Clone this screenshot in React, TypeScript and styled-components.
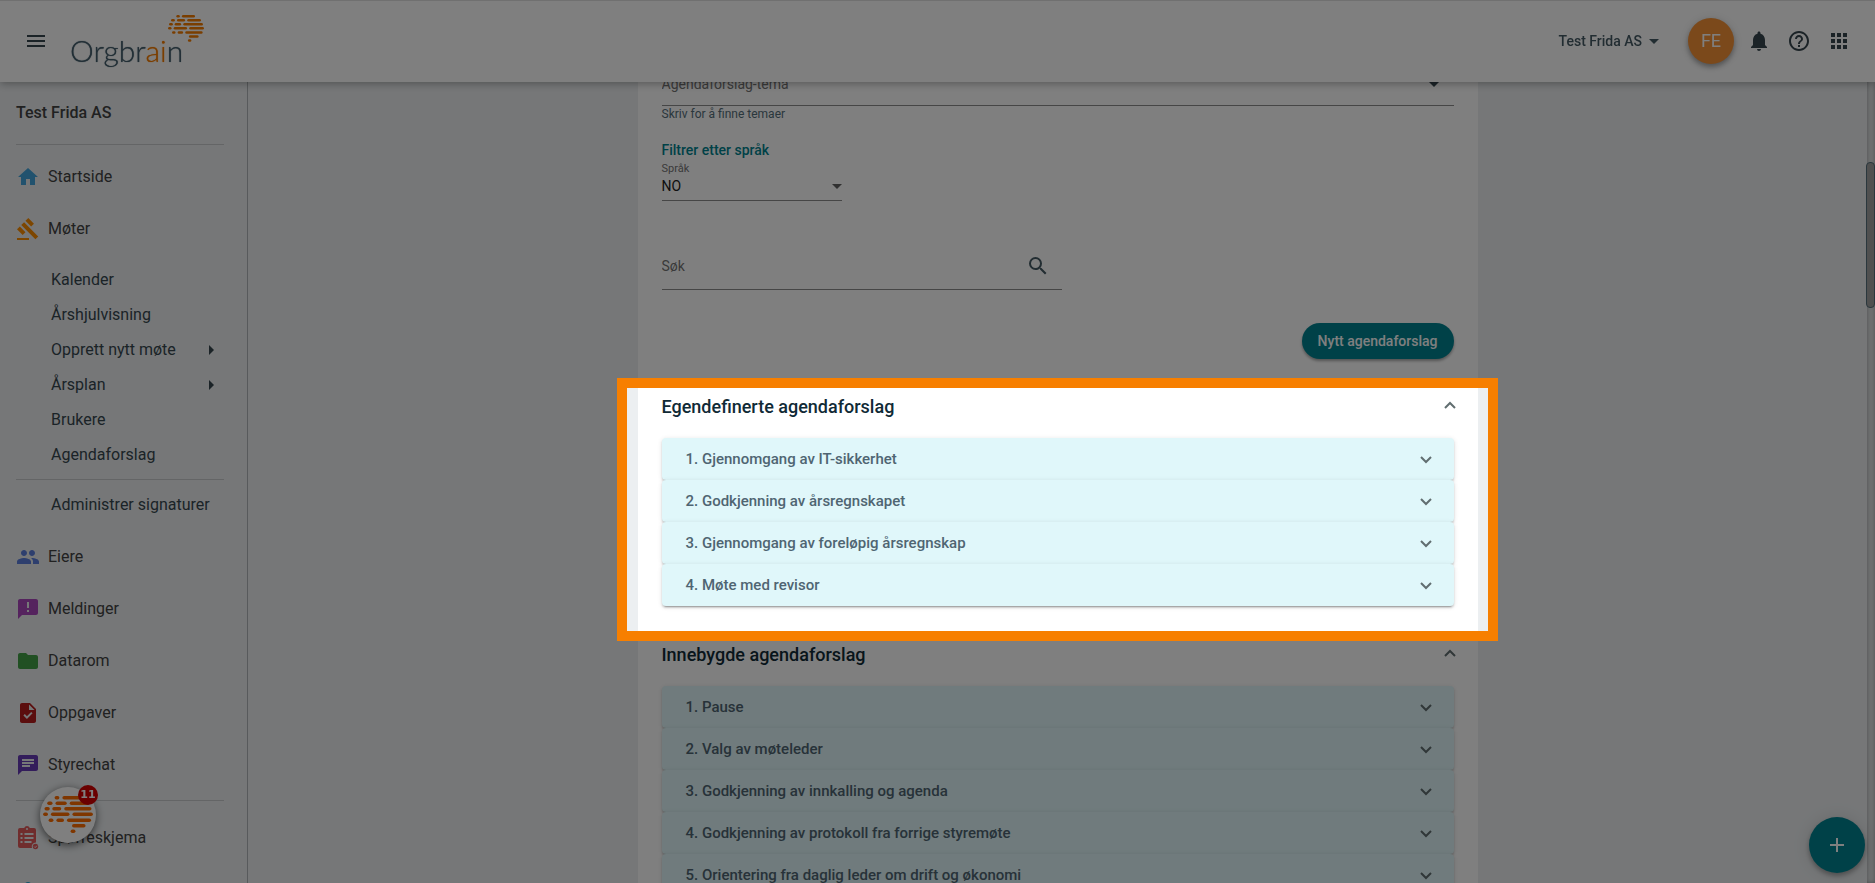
import React from 'react';
import styled, { createGlobalStyle, css } from 'styled-components';
import {
  MdAdd,
  MdAnnouncement,
  MdApps,
  MdArrowDropDown,
  MdArrowRight,
  MdChat,
  MdFolder,
  MdGavel,
  MdHelpOutline,
  MdHome,
  MdMenu,
  MdNotifications,
  MdPeople,
  MdPerson,
  MdSearch,
  MdTask,
} from 'react-icons/md';

const HEADER = 82;
const SIDEBAR = 248;
const SCROLLBAR = 8;

const GlobalStyle = createGlobalStyle`
  *, *::before, *::after { box-sizing: border-box; }
  body {
    margin: 0;
    background: #eceff1;
    font-family: Roboto, "Liberation Sans", sans-serif;
    font-size: 14px;
    line-height: 20px;
    color: #37474f;
    -webkit-font-smoothing: antialiased;
  }
  button, input, select { font: inherit; color: inherit; }
  button { border: 0; padding: 0; background: none; cursor: pointer; }
  a { color: inherit; text-decoration: none; }
  h1, h2, h3, ul, ol { margin: 0; padding: 0; }
  ul, ol { list-style: none; }
`;

const Shell = styled.div`
  height: 100vh;
  display: flex;
  overflow: hidden;
`;

/* ---------- header ---------- */

const Header = styled.header`
  position: fixed;
  inset: 0 0 auto 0;
  z-index: 10;
  height: ${HEADER}px;
  padding: 0 24px 1px;
  display: flex;
  align-items: center;
  justify-content: space-between;
  background: #fff;
  border-top: 1px solid #e0e0e0;
  box-shadow: 0 2px 8px rgba(0, 0, 0, 0.3);
`;

const HeaderGroup = styled.div`
  display: flex;
  align-items: center;
  gap: 16px;
`;

const IconButton = styled.button`
  display: flex;
  width: 24px;
  height: 24px;
  font-size: 24px;
  color: #37474f;
`;

const Brand = styled.a`
  display: flex;
  align-items: flex-start;
  margin-left: 6px;
  height: 52px;
`;

const BrandName = styled.span`
  margin: 18px -15px 0 0;
  font-family: Lato, sans-serif;
  font-weight: 300;
  font-size: 30px;
  line-height: 34px;
  color: #455f6d;
  text-shadow: 0 0 1px currentColor;

  em {
    font-style: normal;
    color: #f57c00;
    text-shadow: 0 0 1px currentColor;
  }
`;

const CompanyButton = styled.button`
  display: flex;
  align-items: center;
  margin-right: 6px;
  font-weight: 500;
  color: #455a64;

  svg { font-size: 24px; }
`;

const Avatar = styled.button`
  width: 46px;
  height: 46px;
  margin-right: -3px;
  border-radius: 50%;
  background: #f79236;
  color: #fff;
  font-size: 18px;
  box-shadow: 0 3px 5px rgba(0, 0, 0, 0.3), 0 1px 12px rgba(0, 0, 0, 0.12);
`;

/* ---------- sidebar ---------- */

const Sidebar = styled.nav`
  flex: none;
  width: ${SIDEBAR}px;
  padding: ${HEADER}px 23px 0 16px;
  border-right: 1px solid #b0b5b8;
  overflow: hidden;
`;

const SidebarTitle = styled.h1`
  height: 62px;
  display: flex;
  align-items: center;
  font-size: 16px;
  font-weight: 500;
  color: #424242;
`;

const Rule = styled.hr`
  margin: 0;
  border: 0;
  border-top: 1px solid #c8cbcd;
`;

const NavItem = styled.a`
  display: flex;
  align-items: center;
  gap: 8px;
  height: 52px;
  font-size: 16px;
  color: #424242;
`;

const NavIcon = styled.span<{ $color: string }>`
  display: flex;
  font-size: 24px;
  color: ${(p) => p.$color};
`;

const NavGroup = styled.div<{ $top: number }>`
  padding-top: ${(p) => p.$top}px;
`;

const SubNav = styled.div`
  padding: 7px 0;
`;

const SubItem = styled.a`
  display: flex;
  align-items: center;
  justify-content: space-between;
  height: 35px;
  padding: 0 1px 0 35px;
  font-size: 16px;
  color: #37474f;

  svg { font-size: 24px; }
`;

/* ---------- content ---------- */

const Main = styled.main`
  flex: 1;
  min-width: 0;
  display: flex;
  justify-content: center;
`;

const Panel = styled.div`
  flex: 0 1 840px;
  min-height: 100%;
  height: max-content;
  padding: 74px 24px 0;
  background: #fff;
`;

const Form = styled.form`
  padding-bottom: 30px;
`;

const FieldRow = styled.div<{ $width?: number; $bottom: number }>`
  display: flex;
  align-items: center;
  max-width: ${(p) => (p.$width ? `${p.$width}px` : 'none')};
  padding-bottom: ${(p) => p.$bottom}px;
  border-bottom: 1px solid #8c8c8c;
`;

const fieldText = css`
  flex: 1;
  min-width: 0;
  height: 20px;
  padding: 0;
  border: 0;
  outline: 0;
  background: none;
`;

const TextInput = styled.input`
  ${fieldText}
  &::placeholder { color: #757575; opacity: 1; }
`;

const Select = styled.select`
  ${fieldText}
  appearance: none;
  color: #212121;
`;

const Caret = styled(MdArrowDropDown)`
  flex: none;
  margin: -2px -7px -2px 0;
  font-size: 24px;
  color: #616161;
`;

const TopicCaret = styled(Caret)`
  margin-right: 8px;
  color: #37474f;
`;

const Hint = styled.div`
  font-size: 12px;
  line-height: 16px;
  color: #546e7a;
`;

const FilterTitle = styled.h2`
  margin-top: 18px;
  font-size: 14px;
  font-weight: 500;
  color: #00838f;
`;

const FieldLabel = styled.label`
  display: block;
  padding-top: 1px;
  font-size: 11px;
  line-height: 15px;
  color: #757575;
`;

const SearchArea = styled.div`
  padding: 53px 0 33px;
`;

const SearchButton = styled(IconButton)`
  margin-right: 12px;
  color: #455a64;
`;

const Actions = styled.div`
  display: flex;
  justify-content: flex-end;
`;

const PrimaryButton = styled.button`
  height: 36px;
  padding: 0 16px;
  border-radius: 18px;
  background: #008391;
  color: #fff;
  font-weight: 500;
  box-shadow: 0 2px 3px rgba(0, 0, 0, 0.35);
`;

const Section = styled.section`
  padding-bottom: 31px;
`;

const SectionHeader = styled.button`
  display: flex;
  align-items: center;
  justify-content: space-between;
  width: 100%;
  height: 36px;
  margin-bottom: 13px;
  font-size: 18px;
  font-weight: 500;
  color: #102a36;
  text-align: left;

  svg { margin: -2px -2px 0 0; }
`;

const AgendaRow = styled.button`
  display: flex;
  align-items: center;
  justify-content: space-between;
  width: 100%;
  height: 42px;
  padding: 0 22px 0 24px;
  border-radius: 4px;
  background: #e0f7fa;
  color: #4f6572;
  font-size: 15px;
  font-weight: 500;
  text-align: left;
  box-shadow: 0 3px 1px -2px rgba(0, 0, 0, 0.2), 0 2px 2px rgba(0, 0, 0, 0.14),
    0 1px 5px rgba(0, 0, 0, 0.12);
`;

/* ---------- scrollbar and floating parts ---------- */

const ScrollTrack = styled.div`
  flex: none;
  width: ${SCROLLBAR}px;
  padding-top: 162px;
  background: #dfe2e4;
  box-shadow: inset 0 0 4px rgba(0, 0, 0, 0.3);
`;

const ScrollThumb = styled.div`
  height: 146px;
  margin-left: -1px;
  border: 1px solid #546e7a;
  border-radius: 4px;
  background: #a0a0a0;
`;

const Fab = styled.button`
  position: fixed;
  right: 10px;
  bottom: 10px;
  display: flex;
  align-items: center;
  justify-content: center;
  width: 56px;
  height: 56px;
  border-radius: 50%;
  background: #008391;
  color: #fff;
  font-size: 24px;
  box-shadow: 0 3px 5px rgba(0, 0, 0, 0.3), 0 1px 18px rgba(0, 0, 0, 0.12);
`;

const ChatWidget = styled.button`
  position: fixed;
  left: 40px;
  bottom: 40px;
  display: flex;
  align-items: center;
  justify-content: center;
  width: 56px;
  height: 56px;
  border-radius: 50%;
  background: #fff;
  box-shadow: 0 2px 8px rgba(0, 0, 0, 0.6);
`;

const Badge = styled.span`
  position: absolute;
  top: -2px;
  right: -2px;
  width: 20px;
  height: 20px;
  border-radius: 50%;
  background: #d50000;
  color: #fff;
  font-family: "DejaVu Sans", sans-serif;
  font-size: 11px;
  font-weight: 700;
  line-height: 20px;
  text-align: center;
`;

const TourLayer = styled.div`
  position: fixed;
  inset: 0 ${SCROLLBAR}px 0 ${SIDEBAR}px;
  z-index: 20;
  display: flex;
  justify-content: center;
  padding-top: 378px;
  pointer-events: none;
`;

const Spotlight = styled.div`
  flex: 0 1 881px;
  height: 263px;
  border: 10px solid #f77f00;
  box-shadow: 0 0 0 4000px rgba(0, 0, 0, 0.5);
`;

/* ---------- drawings ---------- */

const BRAIN_BARS: [number, number, number][] = [
  [4, 29, 32], [4, 46, 78],
  [16, 13, 17], [16, 31, 48], [16, 62, 96],
  [28, 7, 11], [28, 24, 36], [28, 50, 102],
  [40, 4, 7], [40, 21, 54], [40, 68, 105],
  [53, 16, 19], [53, 33, 42], [53, 56, 101],
  [65, 67, 89],
  [77, 64, 67],
];

function Brain({ width, color }: { width: number; color: string }) {
  return (
    <svg width={width} viewBox="0 0 109 81" stroke={color} strokeWidth="7.5" strokeLinecap="round" aria-hidden="true">
      {BRAIN_BARS.map(([y, a, b]) => (
        <line key={`${y}-${a}`} x1={a} x2={b} y1={y} y2={y} />
      ))}
    </svg>
  );
}

function Chevron({ up, size = 12 }: { up?: boolean; size?: number }) {
  return (
    <svg width={size} height={size} viewBox="0 0 12 12" fill="none" stroke="#616e70" strokeWidth="2" aria-hidden="true">
      <path d={up ? 'M1 8 L6 3 L11 8' : 'M1 4 L6 9 L11 4'} />
    </svg>
  );
}

function SurveyIcon() {
  return (
    <svg width="24" height="24" viewBox="0 0 24 24" aria-hidden="true">
      <path
        fill="currentColor"
        d="M4 2h4.200a3 3 0 0 1 5.600 0H18a2 2 0 0 1 2 2v12.500a4 4 0 0 0-4 5.500H4a2 2 0 0 1-2-2V4a2 2 0 0 1 2-2z"
      />
      <circle cx="11" cy="3" r="1" fill="#eceff1" />
      <path stroke="#eceff1" strokeWidth="1.800" d="M4.500 8h2M8.500 8h9M4.500 12h2M8.500 12h9M4.500 16h2M8.500 16h7" />
      <circle cx="19.500" cy="20.500" r="2.700" fill="currentColor" />
      <path stroke="#eceff1" fill="none" d="M18.200 20.600l1 1 1.700-1.900" />
    </svg>
  );
}

/* ---------- data ---------- */

const SUB_ITEMS = [
  { label: 'Kalender' },
  { label: 'Årshjulvisning' },
  { label: 'Opprett nytt møte', nested: true },
  { label: 'Årsplan', nested: true },
  { label: 'Brukere' },
  { label: 'Agendaforslag' },
];

const MODULES = [
  { label: 'Eiere', color: '#5c7fdc', icon: <MdPeople /> },
  { label: 'Meldinger', color: '#ab47bc', icon: <MdAnnouncement /> },
  { label: 'Datarom', color: '#43a047', icon: <MdFolder /> },
  { label: 'Oppgaver', color: '#b71c1c', icon: <MdTask /> },
  { label: 'Styrechat', color: '#673ab7', icon: <MdChat /> },
];

const CUSTOM_AGENDA = [
  'Gjennomgang av IT-sikkerhet',
  'Godkjenning av årsregnskapet',
  'Gjennomgang av foreløpig årsregnskap',
  'Møte med revisor',
];

const BUILT_IN_AGENDA = [
  'Pause',
  'Valg av møteleder',
  'Godkjenning av innkalling og agenda',
  'Godkjenning av protokoll fra forrige styremøte',
  'Orientering fra daglig leder om drift og økonomi',
];

function ModuleLink({ label, color, icon }: { label?: string; color: string; icon: React.ReactNode }) {
  return (
    <NavItem href="#">
      <NavIcon $color={color}>{icon}</NavIcon>
      {label}
    </NavItem>
  );
}

function AgendaSection({ title, items }: { title: string; items: string[] }) {
  return (
    <Section>
      <h2>
        <SectionHeader type="button" aria-expanded="true">
          {title}
          <Chevron up />
        </SectionHeader>
      </h2>
      <ol>
        {items.map((item, i) => (
          <li key={item}>
            <AgendaRow type="button" aria-expanded="false">
              {i + 1}. {item}
              <Chevron />
            </AgendaRow>
          </li>
        ))}
      </ol>
    </Section>
  );
}

export default function App() {
  return (
    <>
      <GlobalStyle />
      <Header>
        <HeaderGroup>
          <IconButton aria-label="Meny"><MdMenu /></IconButton>
          <Brand href="#">
            <BrandName>Orgbr<em>ai</em>n</BrandName>
            <Brain width={36} color="#f57c00" />
          </Brand>
        </HeaderGroup>
        <HeaderGroup>
          <CompanyButton>Test Frida AS<MdArrowDropDown /></CompanyButton>
          <Avatar>FE</Avatar>
          <IconButton aria-label="Varsler"><MdNotifications /></IconButton>
          <IconButton aria-label="Hjelp"><MdHelpOutline /></IconButton>
          <IconButton aria-label="Apper"><MdApps /></IconButton>
        </HeaderGroup>
      </Header>

      <Shell>
        <Sidebar>
          <SidebarTitle>Test Frida AS</SidebarTitle>
          <Rule />
          <NavGroup $top={6}>
            <ModuleLink label="Startside" color="#42a5dc" icon={<MdHome />} />
            <ModuleLink label="Møter" color="#fb8c00" icon={<MdGavel />} />
          </NavGroup>
          <SubNav>
            {SUB_ITEMS.map((item) => (
              <SubItem key={item.label} href="#">
                {item.label}
                {item.nested && <MdArrowRight />}
              </SubItem>
            ))}
          </SubNav>
          <Rule />
          <NavGroup $top={7}>
            <SubItem href="#">Administrer signaturer</SubItem>
          </NavGroup>
          <NavGroup $top={9}>
            {MODULES.map((m) => (
              <ModuleLink key={m.label} {...m} />
            ))}
          </NavGroup>
          <NavGroup $top={9}>
            <Rule />
          </NavGroup>
          <NavGroup $top={11}>
            <ModuleLink label="Spørreskjema" color="#e05a5a" icon={<SurveyIcon />} />
            <ModuleLink color="#26a6d5" icon={<MdPerson />} />
          </NavGroup>
        </Sidebar>

        <Main>
          <Panel>
            <Form onSubmit={(e) => e.preventDefault()}>
              <FieldRow $bottom={11}>
                <TextInput aria-label="Agendaforslag-tema" placeholder="Agendaforslag-tema" />
                <TopicCaret />
              </FieldRow>
              <Hint>Skriv for å finne temaer</Hint>
              <FilterTitle>Filtrer etter språk</FilterTitle>
              <FieldLabel htmlFor="language">Språk</FieldLabel>
              <FieldRow $width={180} $bottom={4}>
                <Select id="language" defaultValue="NO">
                  <option>NO</option>
                  <option>EN</option>
                </Select>
                <Caret />
              </FieldRow>
              <SearchArea>
                <FieldRow $width={400} $bottom={11}>
                  <TextInput aria-label="Søk" placeholder="Søk" />
                  <SearchButton type="submit" aria-label="Søk"><MdSearch /></SearchButton>
                </FieldRow>
              </SearchArea>
              <Actions>
                <PrimaryButton type="button">Nytt agendaforslag</PrimaryButton>
              </Actions>
            </Form>
            <AgendaSection title="Egendefinerte agendaforslag" items={CUSTOM_AGENDA} />
            <AgendaSection title="Innebygde agendaforslag" items={BUILT_IN_AGENDA} />
          </Panel>
        </Main>
        <ScrollTrack>
          <ScrollThumb />
        </ScrollTrack>
      </Shell>

      <Fab aria-label="Legg til"><MdAdd /></Fab>
      <ChatWidget aria-label="Åpne chat">
        <Brain width={50} color="#ff6d00" />
        <Badge>11</Badge>
      </ChatWidget>
      <TourLayer>
        <Spotlight />
      </TourLayer>
    </>
  );
}
